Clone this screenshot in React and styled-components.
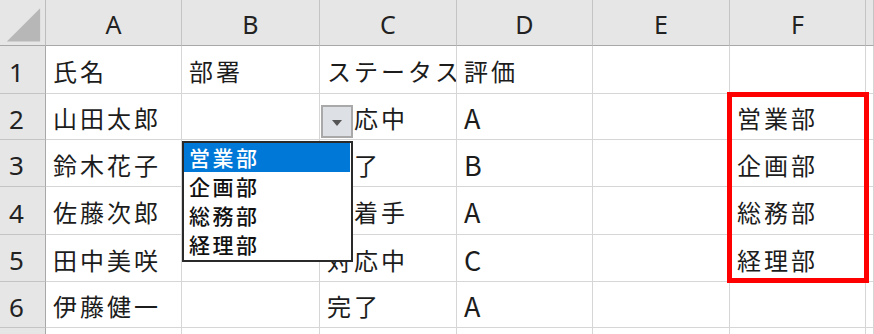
import styled, { createGlobalStyle } from 'styled-components';

const GlobalStyle = createGlobalStyle`
  html, body {
    margin: 0;
    padding: 0;
    background: #ffffff;
    overflow: hidden;
  }
`;

const colWidths = [46, 136, 138, 137, 136, 137, 136];
const rowHeights = [46, 48, 46, 47, 48, 47, 46, 47];
const columns = ['A', 'B', 'C', 'D', 'E', 'F'];

const rows = [
  ['氏名', '部署', 'ステータス', '評価', '', ''],
  ['山田太郎', '', '対応中', 'A', '', '営業部'],
  ['鈴木花子', '', '完了', 'B', '', '企画部'],
  ['佐藤次郎', '', '未着手', 'A', '', '総務部'],
  ['田中美咲', '', '対応中', 'C', '', '経理部'],
  ['伊藤健一', '', '完了', 'A', '', ''],
  ['', '', '', '', '', ''],
];

const options = ['営業部', '企画部', '総務部', '経理部'];

function App() {
  return (
    <>
      <GlobalStyle />
      <Sheet>
        <Grid>
          <Corner>
            <svg width="46" height="46" viewBox="0 0 46 46">
              <polygon points="7,42 41,8 41,42" fill="#b7b7b7" />
            </svg>
          </Corner>
          {columns.map((c) => (
            <ColHead key={c}>{c}</ColHead>
          ))}
          <ColHead />
          {rows.map((row, r) => (
            <Row key={r} cells={row} index={r + 1} />
          ))}
        </Grid>
        <DropButton>
          <Arrow />
        </DropButton>
        <DropList>
          {options.map((o, i) => (
            <Option key={o} $selected={i === 0}>{o}</Option>
          ))}
        </DropList>
        <Highlight />
      </Sheet>
    </>
  );
}

function Row({ cells, index }) {
  return (
    <>
      <RowHead>{index}</RowHead>
      {cells.map((text, i) => (
        <Cell key={i} $latin={/^[A-Z]$/.test(text)}>{text}</Cell>
      ))}
      <Cell />
    </>
  );
}

const Sheet = styled.div`
  position: relative;
  width: 874px;
  height: 334px;
  overflow: hidden;
`;

const Grid = styled.div`
  display: grid;
  grid-template-columns: ${colWidths.map((w) => `${w}px`).join(' ')} 1fr;
  grid-template-rows: ${rowHeights.map((h) => `${h}px`).join(' ')};
`;

const Corner = styled.div`
  background: #e6e6e6;
  border-right: 1px solid #bdbdbd;
  border-bottom: 1px solid #a8a8a8;
  box-sizing: border-box;
  display: flex;
  overflow: hidden;
`;

const ColHead = styled.div`
  background: #e6e6e6;
  border-right: 1px solid #c4c4c4;
  border-bottom: 1px solid #a8a8a8;
  box-sizing: border-box;
  display: flex;
  align-items: center;
  justify-content: center;
  padding-top: 3px;
  font-family: 'Noto Sans', 'Liberation Sans', sans-serif;
  font-size: 25px;
  color: #222222;
`;

const RowHead = styled.div`
  background: #e6e6e6;
  border-right: 1px solid #a8a8a8;
  border-bottom: 1px solid #c4c4c4;
  box-sizing: border-box;
  display: flex;
  align-items: center;
  justify-content: center;
  padding: 4px 12px 0 0;
  font-family: 'Noto Sans', 'Liberation Sans', sans-serif;
  font-size: 26px;
  color: #222222;
`;

const Cell = styled.div`
  border-right: 1px solid #d6d6d6;
  border-bottom: 1px solid #d6d6d6;
  box-sizing: border-box;
  display: flex;
  align-items: center;
  padding: 2px 0 0 7px;
  overflow: hidden;
  white-space: nowrap;
  font-family: 'Noto Sans CJK JP', 'Noto Sans', sans-serif;
  font-size: ${(p) => (p.$latin ? '27px' : '24px')};
  letter-spacing: ${(p) => (p.$latin ? '0' : '3px')};
  color: #1c1c1c;
`;

const DropButton = styled.div`
  position: absolute;
  left: 321px;
  top: 105px;
  width: 32px;
  height: 33px;
  box-sizing: border-box;
  background: #dde0e5;
  border: 2px solid #a9a9a9;
  display: flex;
  align-items: center;
  justify-content: center;
`;

const Arrow = styled.div`
  width: 0;
  height: 0;
  border-left: 5px solid transparent;
  border-right: 5px solid transparent;
  border-top: 6px solid #555555;
  margin-top: 2px;
`;

const DropList = styled.div`
  position: absolute;
  left: 182px;
  top: 141px;
  width: 171px;
  height: 121px;
  box-sizing: border-box;
  background: #ffffff;
  border: 2px solid #2a2a2a;
  padding: 0 1px 0 0;
  display: flex;
  flex-direction: column;
`;

const Option = styled.div`
  height: 29px;
  line-height: 29px;
  padding-left: 5px;
  font-family: 'Noto Sans CJK JP', 'Noto Sans', sans-serif;
  font-size: 21px;
  font-weight: 500;
  letter-spacing: 2.5px;
  white-space: nowrap;
  color: ${(p) => (p.$selected ? '#ffffff' : '#111111')};
  background: ${(p) => (p.$selected ? '#0078d7' : 'transparent')};
`;

const Highlight = styled.div`
  position: absolute;
  left: 727px;
  top: 92px;
  width: 142px;
  height: 191px;
  box-sizing: border-box;
  border: 5px solid #ff0000;
  pointer-events: none;
`;

export default App;
